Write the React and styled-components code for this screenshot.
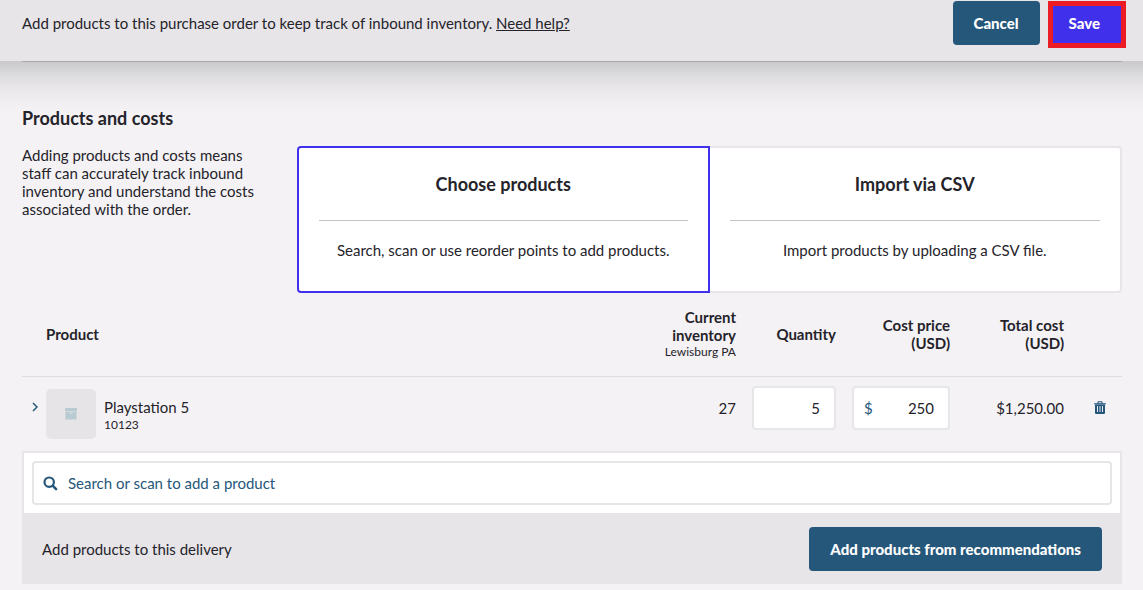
import React, { useState } from 'react';
import styled, { createGlobalStyle } from 'styled-components';

const GlobalStyle = createGlobalStyle`
    * {
        box-sizing: border-box;
    }
    body {
        margin: 0;
        background: #f4f2f5;
        color: #25232a;
        font-family: Lato, "Liberation Sans", sans-serif;
        font-size: 15px;
        line-height: 18px;
    }
    button, input {
        font: inherit;
        color: inherit;
    }
`;

const StyleHeader = styled.header`
    display: flex;
    justify-content: space-between;
    align-items: flex-start;
    min-height: 61px;
    padding: 1px 17px 0 22px;
    background: #e7e5e8;
`;

const StyleIntro = styled.p`
    margin: 0;
    padding-top: 13px;
`;

const StyleLink = styled.a`
    color: inherit;
    text-decoration: underline;
`;

const StyleActions = styled.div`
    display: flex;
    align-items: flex-start;
    gap: 8px;
`;

const StyleButton = styled.button`
    height: 44px;
    padding: 0 21px;
    border: 0;
    border-radius: 4px;
    background: #25577a;
    color: #fff;
    font-weight: 900;
    cursor: pointer;
`;

const StyleSaveButton = styled(StyleButton)`
    height: 47px;
    padding: 0 21px 3px 16px;
    border: 5px solid #ed1c24;
    border-radius: 0;
    background: #4130eb;
`;

const StyleMain = styled.main`
    padding: 0 21px 6px 22px;
    background: linear-gradient(#c8c7ca 0, #dcdbdd 14px, #eae8eb 28px, #f1eff2 42px, #f4f2f5 54px);
`;

const StyleDivider = styled.hr`
    height: 1px;
    margin: 0;
    border: 0;
    background: #aaa7ad;
`;

const StyleTitle = styled.h2`
    margin: 0;
    font-size: 18px;
    line-height: 24px;
    font-weight: 700;
`;

const StyleSection = styled.section`
    padding-top: 44px;
`;

const StyleColumns = styled.div`
    display: grid;
    grid-template-columns: 1fr 3fr;
    padding-top: 16px;
`;

const StyleHelp = styled.p`
    margin: 0;
    padding-right: 40px;
`;

const StyleCards = styled.div`
    display: grid;
    grid-template-columns: 1fr 1fr;
`;

const StyleCard = styled.button`
    height: 147px;
    padding: 0 20px;
    border: 2px solid ${({ $active }) => ($active ? '#4130eb' : '#e7e5e8')};
    ${({ $active }) => !$active && 'border-left: 0;'}
    border-radius: ${({ $active }) => ($active ? '4px 0 0 4px' : '0 4px 4px 0')};
    background: #fff;
    text-align: center;
    cursor: pointer;
`;

const StyleCardTitle = styled.span`
    display: block;
    padding-bottom: 24px;
    border-bottom: 1px solid #c4c4c4;
    font-size: 18px;
    line-height: 24px;
    font-weight: 700;
`;

const StyleCardText = styled.span`
    display: block;
    padding-top: 20px;
    padding-bottom: 9px;
`;

const StyleTable = styled.table`
    width: 100%;
    table-layout: fixed;
    border-collapse: collapse;
`;

const StyleHeadCell = styled.th`
    height: 83px;
    width: ${({ $width }) => $width || 'auto'};
    padding: ${({ $left }) => ($left ? '0 0 0 24px' : '0 0 0 14px')};
    border-bottom: 1px solid #dfdde0;
    text-align: ${({ $left }) => ($left ? 'left' : 'right')};
    vertical-align: middle;
    font-weight: 700;
`;

const StyleOutlet = styled.small`
    display: block;
    font-size: 12px;
    line-height: 16px;
    font-weight: 400;
    white-space: nowrap;
`;

const StyleCell = styled.td`
    height: 75px;
    padding: 0 0 12px;
    text-align: right;
    vertical-align: middle;
`;

const StyleProduct = styled.div`
    display: flex;
    align-items: flex-start;
    padding-top: 12px;
    text-align: left;
`;

const StyleIconButton = styled.button`
    display: inline-flex;
    align-items: center;
    justify-content: center;
    width: ${({ $width }) => $width};
    height: 24px;
    padding: 0;
    border: 0;
    background: none;
    color: #25577a;
    vertical-align: middle;
    cursor: pointer;
`;

const StyleExpand = styled(StyleIconButton)`
    margin-top: 6px;
    padding-left: 2px;
`;

const StyleThumb = styled.div`
    display: flex;
    align-items: center;
    justify-content: center;
    width: 50px;
    height: 50px;
    margin-right: 8px;
    border-radius: 5px;
    background: #e6e4e7;
`;

const StyleProductText = styled.div`
    padding-top: 9px;
`;

const StyleSku = styled.div`
    font-size: 12px;
    line-height: 18px;
`;

const StyleField = styled.label`
    display: inline-flex;
    align-items: center;
    width: ${({ $width }) => $width || '100%'};
    height: 44px;
    padding: 0 ${({ $width }) => ($width ? '14px' : '10px')} 0 10px;
    border: 2px solid #e6e5e7;
    border-radius: 4px;
    background: #fff;
    color: #25577a;
    vertical-align: middle;
`;

const StyleInput = styled.input`
    flex: 1;
    min-width: 0;
    width: 0;
    padding: 0;
    border: 0;
    outline: 0;
    background: none;
    color: #25232a;
    text-align: ${({ $right }) => ($right ? 'right' : 'left')};

    &::placeholder {
        color: #25577a;
        opacity: 1;
    }
`;

const StylePanel = styled.div`
    border: 2px solid #e7e5e8;
    background: #e7e5e8;
`;

const StyleSearch = styled.div`
    display: flex;
    padding: 8px;
    background: #fff;

    label {
        padding-left: 9px;
    }

    svg {
        margin-right: 10px;
    }
`;

const StylePanelFooter = styled.div`
    display: flex;
    align-items: center;
    justify-content: space-between;
    padding: 14px 18px 11px;
`;

const ChevronIcon = () => (
    <svg width="6" height="10" viewBox="0 0 6 10" fill="none" stroke="currentColor" strokeWidth="1.5" aria-hidden="true">
        <path d="M1 1l4 4-4 4" />
    </svg>
);

const BoxIcon = () => (
    <svg width="12" height="12" viewBox="0 0 12 12" fill="#b9cbd2" aria-hidden="true">
        <path d="M0 0h12v3H0z" />
        <path d="M.5 3.500h11V11a.5.5 0 0 1-.5.5H1a.5.5 0 0 1-.5-.5zM4.500 4.600v.9h3v-.9z" fillRule="evenodd" />
    </svg>
);

const SearchIcon = () => (
    <svg width="15" height="15" viewBox="0 0 15 15" fill="none" stroke="currentColor" aria-hidden="true">
        <circle cx="6.2" cy="6.2" r="4.7" strokeWidth="2.2" />
        <path d="M9.700 9.700l3.400 3.400" strokeWidth="2.6" strokeLinecap="round" />
    </svg>
);

const TrashIcon = () => (
    <svg width="12" height="13" viewBox="0 0 12 13" aria-hidden="true">
        <path d="M4 2.500V1.300q0-.6.6-.6h2.800q.6 0 .6.6v1.200" fill="none" stroke="currentColor" strokeWidth="1.1" />
        <path d="M.2 2.200h11.600v1.200H.2z" fill="currentColor" />
        <path d="M1 3.400h10V12q0 1-1 1H2q-1 0-1-1z" fill="currentColor" />
        <path d="M3.500 5v6M6 5v6M8.500 5v6" stroke="#e6ebf0" strokeWidth="1" />
    </svg>
);

const methods = [
    { id: 'choose', title: 'Choose products', text: 'Search, scan or use reorder points to add products.' },
    { id: 'csv', title: 'Import via CSV', text: 'Import products by uploading a CSV file.' },
];

const formatTotal = (value) => {
    return '$' + value.toLocaleString('en-US', { minimumFractionDigits: 2, maximumFractionDigits: 2 });
}

function ProductRow({ name, sku, inventory }) {
    const [quantity, setQuantity] = useState('5');
    const [cost, setCost] = useState('250');

    return (
        <tr>
            <StyleCell>
                <StyleProduct>
                    <StyleExpand type="button" $width="24px" aria-label="Show details"><ChevronIcon /></StyleExpand>
                    <StyleThumb><BoxIcon /></StyleThumb>
                    <StyleProductText>
                        <div>{name}</div>
                        <StyleSku>{sku}</StyleSku>
                    </StyleProductText>
                </StyleProduct>
            </StyleCell>
            <StyleCell>{inventory}</StyleCell>
            <StyleCell>
                <StyleField $width="84px">
                    <StyleInput $right aria-label="Quantity" value={quantity} onChange={(e) => setQuantity(e.target.value)} />
                </StyleField>
            </StyleCell>
            <StyleCell>
                <StyleField $width="98px">
                    $
                    <StyleInput $right aria-label="Cost price" value={cost} onChange={(e) => setCost(e.target.value)} />
                </StyleField>
            </StyleCell>
            <StyleCell>{formatTotal(quantity * cost)}</StyleCell>
            <StyleCell>
                <StyleIconButton type="button" $width="44px" aria-label="Remove product"><TrashIcon /></StyleIconButton>
            </StyleCell>
        </tr>
    );
}

function App() {
    const [method, setMethod] = useState('choose');

    return (
        <>
            <GlobalStyle />
            <StyleHeader>
                <StyleIntro>
                    Add products to this purchase order to keep track of inbound inventory. <StyleLink href="#help">Need help?</StyleLink>
                </StyleIntro>
                <StyleActions>
                    <StyleButton type="button">Cancel</StyleButton>
                    <StyleSaveButton type="button">Save</StyleSaveButton>
                </StyleActions>
            </StyleHeader>
            <StyleMain>
                <StyleDivider />
                <StyleSection>
                    <StyleTitle>Products and costs</StyleTitle>
                    <StyleColumns>
                        <StyleHelp>
                            Adding products and costs means staff can accurately track inbound inventory and understand the costs associated with the order.
                        </StyleHelp>
                        <StyleCards>
                            {methods.map(({ id, title, text }) => (
                                <StyleCard key={id} type="button" $active={method === id} onClick={() => setMethod(id)}>
                                    <StyleCardTitle>{title}</StyleCardTitle>
                                    <StyleCardText>{text}</StyleCardText>
                                </StyleCard>
                            ))}
                        </StyleCards>
                    </StyleColumns>
                </StyleSection>
                <StyleTable>
                    <thead>
                        <tr>
                            <StyleHeadCell $left>Product</StyleHeadCell>
                            <StyleHeadCell $width="88px">Current inventory<StyleOutlet>Lewisburg PA</StyleOutlet></StyleHeadCell>
                            <StyleHeadCell $width="100px">Quantity</StyleHeadCell>
                            <StyleHeadCell $width="114px">Cost price<br />(USD)</StyleHeadCell>
                            <StyleHeadCell $width="114px">Total cost<br />(USD)</StyleHeadCell>
                            <StyleHeadCell $width="58px" aria-label="Remove" />
                        </tr>
                    </thead>
                    <tbody>
                        <ProductRow name="Playstation 5" sku="10123" inventory={27} />
                    </tbody>
                </StyleTable>
                <StylePanel>
                    <StyleSearch>
                        <StyleField>
                            <SearchIcon />
                            <StyleInput type="text" aria-label="Search products" placeholder="Search or scan to add a product" />
                        </StyleField>
                    </StyleSearch>
                    <StylePanelFooter>
                        <span>Add products to this delivery</span>
                        <StyleButton type="button">Add products from recommendations</StyleButton>
                    </StylePanelFooter>
                </StylePanel>
            </StyleMain>
        </>
    );
}

export default App;
